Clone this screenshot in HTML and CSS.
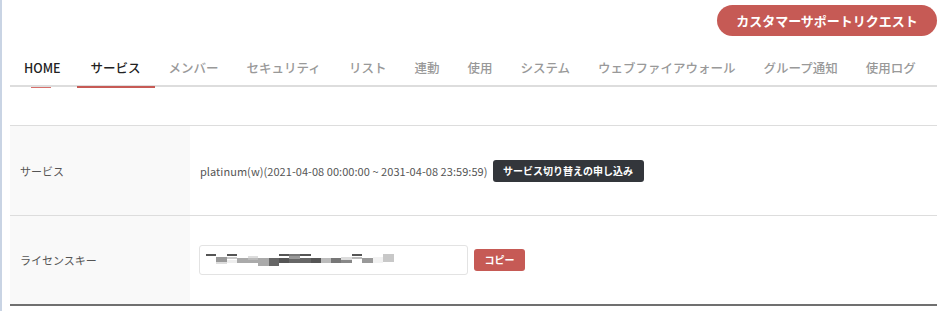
FILE: index.html
```html
<!DOCTYPE html>
<html lang="ja">
<head>
<meta charset="utf-8">
<title>サービス</title>
<link rel="stylesheet" href="styles.css">
</head>
<body>
<div class="page">
  <div class="top">
    <button class="support">カスタマーサポートリクエスト</button>
  </div>
  <nav class="tabs">
    <a class="tab home">HOME</a>
    <a class="tab active">サービス</a>
    <a class="tab">メンバー</a>
    <a class="tab">セキュリティ</a>
    <a class="tab">リスト</a>
    <a class="tab">連動</a>
    <a class="tab">使用</a>
    <a class="tab">システム</a>
    <a class="tab">ウェブファイアウォール</a>
    <a class="tab">グループ通知</a>
    <a class="tab">使用ログ</a>
  </nav>
  <table class="info">
    <tr>
      <th>サービス</th>
      <td>
        <div class="cell">
          <span class="plan">platinum(w)(2021-04-08 00:00:00 ~ 2031-04-08 23:59:59)</span>
          <button class="dark-btn">サービス切り替えの申し込み</button>
        </div>
      </td>
    </tr>
    <tr>
      <th>ライセンスキー</th>
      <td>
        <div class="cell">
          <div class="keybox">
            <svg class="mosaic" width="190" height="14" viewBox="0 0 190 14">
              <rect x="0" y="0" width="10" height="2" fill="#555"/>
              <rect x="10" y="3" width="11" height="5" fill="#999"/>
              <rect x="10" y="8" width="11" height="2" fill="#ddd"/>
              <rect x="21" y="0" width="10" height="2" fill="#555"/>
              <rect x="21" y="3" width="10" height="2" fill="#ccc"/>
              <rect x="21" y="6" width="10" height="3" fill="#eee"/>
              <rect x="31" y="4" width="11" height="5" fill="#aaa"/>
              <rect x="42" y="2" width="10" height="2" fill="#ddd"/>
              <rect x="42" y="4" width="10" height="2" fill="#bbb"/>
              <rect x="42" y="6" width="10" height="3" fill="#aaa"/>
              <rect x="52" y="4" width="11" height="8" fill="#aaa"/>
              <rect x="63" y="4" width="10" height="8" fill="#666"/>
              <rect x="73" y="0" width="10" height="2" fill="#555"/>
              <rect x="73" y="4" width="10" height="5" fill="#555"/>
              <rect x="83" y="0" width="11" height="2" fill="#777"/>
              <rect x="83" y="2" width="11" height="3" fill="#999"/>
              <rect x="83" y="5" width="11" height="4" fill="#666"/>
              <rect x="94" y="0" width="11" height="2" fill="#555"/>
              <rect x="94" y="4" width="11" height="5" fill="#666"/>
              <rect x="105" y="4" width="10" height="5" fill="#555"/>
              <rect x="115" y="4" width="10" height="5" fill="#bbb"/>
              <rect x="125" y="4" width="10" height="5" fill="#777"/>
              <rect x="135" y="3" width="11" height="3" fill="#ddd"/>
              <rect x="135" y="6" width="11" height="3" fill="#888"/>
              <rect x="146" y="0" width="10" height="2" fill="#555"/>
              <rect x="146" y="3" width="10" height="2" fill="#bbb"/>
              <rect x="156" y="4" width="11" height="5" fill="#999"/>
              <rect x="167" y="3" width="10" height="6" fill="#f2f2f2"/>
              <rect x="177" y="0" width="11" height="8" fill="#c8c8c8"/>
            </svg>
          </div>
          <button class="copy-btn">コピー</button>
        </div>
      </td>
    </tr>
  </table>
</div>
</body>
</html>
```

FILE: styles.css
```css
* { box-sizing: border-box; }
html, body { margin: 0; padding: 0; background: #fff; }
body {
  font-family: "Noto Sans CJK JP", "Noto Sans", sans-serif;
  color: #333;
  border-left: 2px solid #c9d4e4;
  min-height: 311px;
}
.page {
  padding: 0 8px 0 8px;
}
.top {
  display: flex;
  justify-content: flex-end;
  padding-top: 5px;
}
.support {
  width: 220px;
  height: 31px;
  border: none;
  border-radius: 16px;
  background: #c65a55;
  color: #fff;
  font-family: inherit;
  font-size: 13px;
  font-weight: 700;
  padding: 0;
}
.tabs {
  display: flex;
  margin-top: 22px;
  border-bottom: 2px solid #dddddd;
}
.tab {
  position: relative;
  display: block;
  padding: 0 14px 7px 14px;
  line-height: 20px;
  font-size: 12.5px;
  font-weight: 500;
  color: #999;
  white-space: nowrap;
}
.tab.home { color: #222; padding-left: 14px; padding-right: 16px; }
.tab.home::after {
  content: "";
  position: absolute;
  left: 21px;
  width: 20px;
  bottom: -3px;
  height: 1px;
  background: #d76f6b;
}
.tab.active { color: #222; }
.tab.active::after {
  content: "";
  position: absolute;
  left: 0;
  right: 0;
  bottom: -3px;
  height: 2px;
  background: #c65a55;
}
.info {
  width: 100%;
  margin-top: 38px;
  border-collapse: collapse;
  border-top: 1px solid #dddddd;
  border-bottom: 2px solid #707070;
}
.info th {
  width: 180px;
  background: #f9f9f9;
  text-align: left;
  font-weight: 400;
  font-size: 11px;
  color: #555;
  padding: 0 0 0 10px;
}
.info td {
  padding: 0 10px;
  font-size: 11px;
  color: #555;
}
.info tr:first-child th,
.info tr:first-child td {
  height: 90px;
  border-bottom: 1px solid #dddddd;
}
.info tr:last-child th,
.info tr:last-child td {
  height: 89px;
}
.cell {
  display: flex;
  align-items: center;
  gap: 5px;
}
.plan {
  font-size: 11px;
  color: #555;
  letter-spacing: 0.05px;
}
.dark-btn {
  height: 22px;
  width: 151px;
  border: none;
  border-radius: 3px;
  background: #33363b;
  color: #fff;
  font-family: inherit;
  font-size: 10px;
  font-weight: 700;
  padding: 0;
}
.keybox {
  width: 269px;
  height: 30px;
  margin-left: -1px;
  border: 1px solid #e3e3e3;
  border-radius: 3px;
  display: flex;
  align-items: center;
  padding-left: 6px;
  margin-right: 1px;
}
.mosaic { display: block; margin-top: 2px; }
.copy-btn {
  height: 22px;
  width: 51px;
  border: none;
  border-radius: 3px;
  background: #c65a55;
  color: #fff;
  font-family: inherit;
  font-size: 10px;
  font-weight: 700;
  padding: 0;
}
```
